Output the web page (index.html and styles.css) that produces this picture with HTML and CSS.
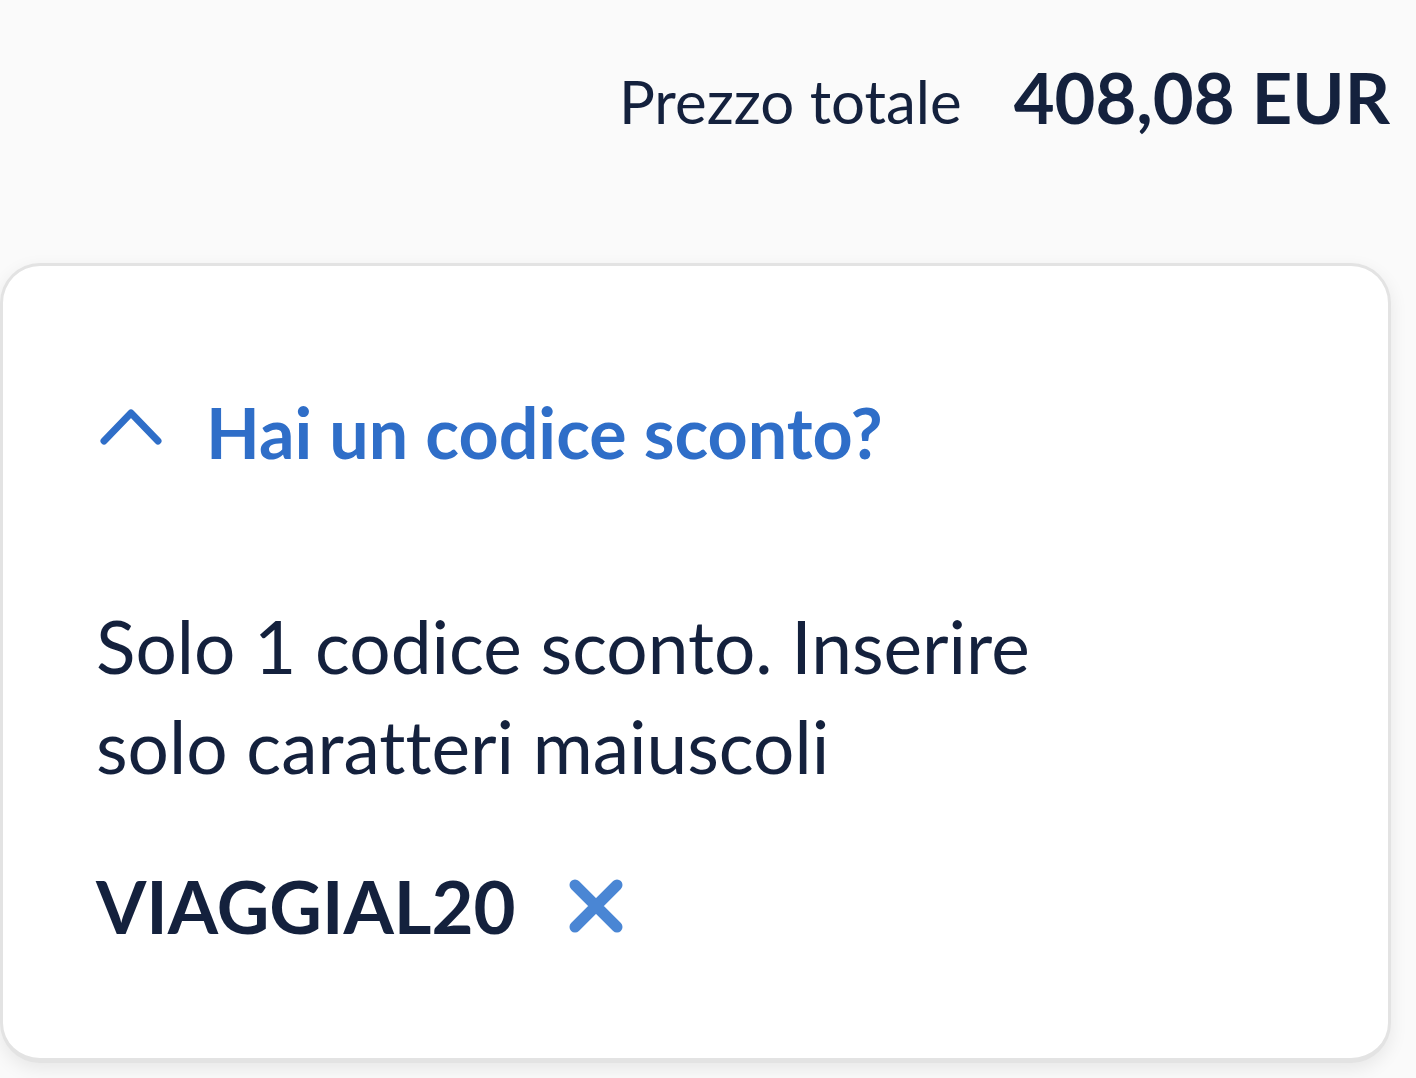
FILE: index.html
```html
<!DOCTYPE html>
<html lang="it">
<head>
  <meta charset="UTF-8">
  <title>Codice sconto</title>
  <link rel="stylesheet" href="styles.css">
</head>
<body>
  <div class="total">
    <span class="total-label">Prezzo totale</span>
    <span class="total-amount">408,08 EUR</span>
  </div>

  <div class="card">
    <div class="toggle">
      <svg class="chevron" width="64" height="40" viewBox="0 0 64 40">
        <path d="M4 34 L31 6 L58 34" fill="none" stroke="#2f6ec8" stroke-width="7" stroke-linecap="round" stroke-linejoin="round"/>
      </svg>
      <span>Hai un codice sconto?</span>
    </div>
    <p class="hint">Solo 1 codice sconto. Inserire<br>solo caratteri maiuscoli</p>
    <div class="code">
      <span>VIAGGIAL20</span>
      <svg class="remove" width="58" height="58" viewBox="0 0 58 58">
        <path d="M8 8 L50 50 M50 8 L8 50" fill="none" stroke="#4a86d4" stroke-width="11" stroke-linecap="round"/>
      </svg>
    </div>
  </div>
</body>
</html>
```

FILE: styles.css
```css
body {
  margin: 0;
  background: #fafafa;
  color: #14213d;
  font-family: Lato, "Noto Sans", sans-serif;
  font-variant-ligatures: none;
  height: 1078px;
  overflow: hidden;
}
.total {
  display: flex;
  justify-content: flex-end;
  align-items: baseline;
  gap: 52px;
  padding: 54px 26px 0 0;
  height: 263px;
  box-sizing: border-box;
}
.total-label {
  font-size: 60px;
}
.total-amount {
  font-size: 70.5px;
  font-weight: 700;
}
.card {
  width: 1391px;
  height: 800px;
  box-sizing: border-box;
  background: #fff;
  border: 3px solid #e3e3e3;
  border-bottom-width: 5px;
  border-radius: 40px;
  box-shadow: 0 6px 18px rgba(0, 0, 0, 0.08);
  padding: 124px 0 0 93px;
}
.toggle {
  display: flex;
  align-items: center;
  gap: 42px;
  color: #2f6ec8;
  font-size: 70px;
  font-weight: 700;
  margin-left: 4px;
}
.chevron {
  margin-top: -10px;
}
.hint {
  margin: 122px 0 0;
  font-size: 73px;
  line-height: 100px;
}
.code {
  display: flex;
  align-items: center;
  gap: 51px;
  margin-top: 66px;
  font-size: 72.5px;
  font-weight: 700;
}
```
